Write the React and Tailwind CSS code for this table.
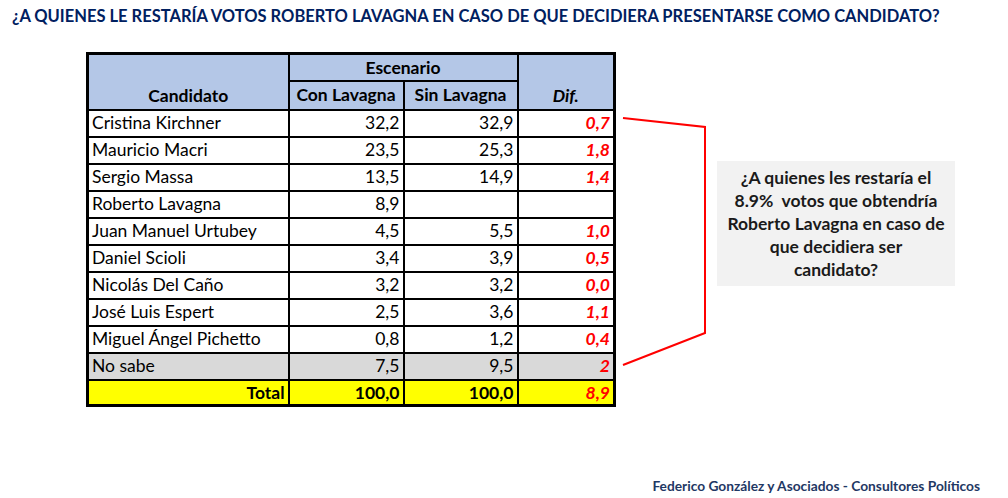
import React from "react";

const rows = [
  ["Cristina Kirchner", "32,2", "32,9", "0,7"],
  ["Mauricio Macri", "23,5", "25,3", "1,8"],
  ["Sergio Massa", "13,5", "14,9", "1,4"],
  ["Roberto Lavagna", "8,9", "", ""],
  ["Juan Manuel Urtubey", "4,5", "5,5", "1,0"],
  ["Daniel Scioli", "3,4", "3,9", "0,5"],
  ["Nicolás Del Caño", "3,2", "3,2", "0,0"],
  ["José Luis Espert", "2,5", "3,6", "1,1"],
  ["Miguel Ángel Pichetto", "0,8", "1,2", "0,4"],
];

const App = () => {
  return (
    <div className="w-[1008px] h-[498px] bg-white relative font-['Lato',sans-serif] text-black overflow-hidden">
      {/* Title */}
      <h1 className="h-[28px] pt-[6px] pl-[12px] text-[16.5px] leading-[20px] font-bold text-[#002060] whitespace-nowrap">
        ¿A QUIENES LE RESTARÍA VOTOS ROBERTO LAVAGNA EN CASO DE QUE DECIDIERA PRESENTARSE COMO CANDIDATO?
      </h1>

      <div className="flex items-start pl-[86px] pt-[24px]">
        {/* Table */}
        <table className="border-collapse border-[3px] border-black text-[17.5px] leading-none">
          <colgroup>
            <col className="w-[201px]" />
            <col className="w-[115px]" />
            <col className="w-[114px]" />
            <col className="w-[97px]" />
          </colgroup>
          <thead className="bg-[#b4c7e7] font-bold">
            <tr className="h-[27px]">
              <th rowSpan={2} className="border-2 border-black align-bottom pb-[4px] text-center">Candidato</th>
              <th colSpan={2} className="border-2 border-b border-black text-center">Escenario</th>
              <th rowSpan={2} className="border-2 border-black align-bottom pb-[4px] text-center italic">Dif.</th>
            </tr>
            <tr className="h-[29px]">
              <th className="border-2 border-black text-center font-bold whitespace-nowrap">Con Lavagna</th>
              <th className="border-2 border-black text-center font-bold whitespace-nowrap">Sin Lavagna</th>
            </tr>
          </thead>
          <tbody>
            {rows.map(([name, con, sin, dif]) => (
              <tr key={name} className="h-[27px]">
                <td className="border-2 border-black px-[3px] whitespace-nowrap">{name}</td>
                <td className="border-2 border-black px-[3px] text-right">{con}</td>
                <td className="border-2 border-black px-[3px] text-right">{sin}</td>
                <td className="border-2 border-black px-[3px] text-right font-bold italic text-[#ff0000]">{dif}</td>
              </tr>
            ))}
            <tr className="h-[27px] bg-[#d9d9d9]">
              <td className="border-2 border-black px-[3px]">No sabe</td>
              <td className="border-2 border-black px-[3px] text-right">7,5</td>
              <td className="border-2 border-black px-[3px] text-right">9,5</td>
              <td className="border-2 border-black px-[3px] text-right font-bold italic text-[#ff0000]">2</td>
            </tr>
            <tr className="h-[26px] bg-[#ffff00] font-bold">
              <td className="border-2 border-black px-[3px] text-right">Total</td>
              <td className="border-2 border-black px-[3px] text-right">100,0</td>
              <td className="border-2 border-black px-[3px] text-right">100,0</td>
              <td className="border-2 border-black px-[3px] text-right italic text-[#ff0000]">8,9</td>
            </tr>
          </tbody>
        </table>

        {/* Bracket */}
        <svg width="104" height="320" className="shrink-0" viewBox="0 0 104 320">
          <polyline
            points="7,66 89,75 89,281 7,313"
            fill="none"
            stroke="#ff0000"
            strokeWidth="2"
          />
        </svg>

        {/* Note box */}
        <div className="mt-[109px] -ml-[3px] w-[238px] h-[125px] bg-[#f2f2f2] flex items-center justify-center text-center font-bold text-[17.5px] leading-[23px] text-[#1a1a1a] whitespace-nowrap">
          <p>
            ¿A quienes les restaría el
            <br />
            8.9%&nbsp; votos que obtendría
            <br />
            Roberto Lavagna en caso de
            <br />
            que decidiera ser
            <br />
            candidato?
          </p>
        </div>
      </div>

      {/* Footer */}
      <div className="absolute bottom-[1px] right-[28px] text-[13.75px] font-bold text-[#1f3864] whitespace-nowrap">
        Federico González y Asociados - Consultores Políticos
      </div>
    </div>
  );
};

export default App;
